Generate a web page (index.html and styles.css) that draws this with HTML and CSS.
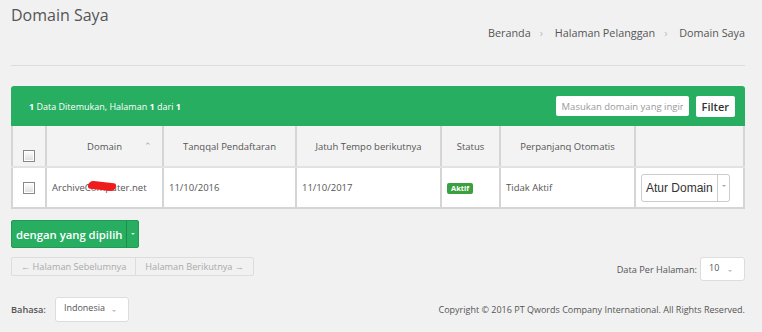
FILE: index.html
```html
<!DOCTYPE html>
<html lang="id">
<head>
  <meta charset="UTF-8" />
  <title>Domain Saya</title>
  <link rel="stylesheet" href="styles.css">
</head>
<body>
  <div class="page">
    <h1>Domain Saya</h1>
    <div class="breadcrumb">
      <span>Beranda</span><span class="sep">&rsaquo;</span>
      <span>Halaman Pelanggan</span><span class="sep">&rsaquo;</span>
      <span>Domain Saya</span>
    </div>
    <hr class="divider">

    <div class="panel">
      <div class="panel-head">
        <div class="found"><b>1</b> Data Ditemukan, Halaman <b>1</b> dari <b>1</b></div>
        <div class="search">
          <input type="text" placeholder="Masukan domain yang ingin dicari">
          <button class="filter">Filter</button>
        </div>
      </div>
      <table class="domains">
        <colgroup>
          <col style="width: 34px">
          <col style="width: 117px">
          <col style="width: 133px">
          <col style="width: 145px">
          <col style="width: 59px">
          <col style="width: 135px">
          <col>
        </colgroup>
        <thead>
          <tr>
            <th class="col-check"><span class="check"></span></th>
            <th class="col-domain">Domain <span class="sort">&#8963;</span></th>
            <th>Tanqqal Pendaftaran</th>
            <th>Jatuh Tempo berikutnya</th>
            <th>Status</th>
            <th>Perpanjanq Otomatis</th>
            <th></th>
          </tr>
        </thead>
        <tbody>
          <tr>
            <td class="col-check"><span class="check"></span></td>
            <td class="left"><span class="domain">ArchiveComputer.net<span class="scribble"></span></span></td>
            <td class="left">11/10/2016</td>
            <td class="left">11/10/2017</td>
            <td class="left"><span class="badge">Aktif</span></td>
            <td class="left">Tidak Aktif</td>
            <td class="left">
              <div class="split">
                <span class="split-main">Atur Domain</span><span class="split-caret"></span>
              </div>
            </td>
          </tr>
        </tbody>
      </table>
    </div>

    <div class="bulk">
      <span class="bulk-main">dengan yang dipilih</span><span class="bulk-caret"></span>
    </div>

    <div class="pager-row">
      <div class="pager">
        <span>&larr; Halaman Sebelumnya</span>
        <span>Halaman Berikutnya &rarr;</span>
      </div>
      <div class="per-page">
        Data Per Halaman:
        <span class="select small">10 <i class="caret"></i></span>
      </div>
    </div>

    <div class="footer">
      <div class="lang">
        <b>Bahasa:</b>
        <span class="select">Indonesia <i class="caret"></i></span>
      </div>
      <div class="copy">Copyright &copy; 2016 PT Qwords Company International. All Rights Reserved.</div>
    </div>
  </div>
</body>
</html>
```

FILE: styles.css
```css
body {
  margin: 0;
  background: #f1f1f1;
  font-family: 'Open Sans', sans-serif;
  color: #555;
}

.page {
  width: 734px;
  margin-left: 11px;
}

h1 {
  margin: 0;
  padding-top: 4px;
  font-size: 16px;
  font-weight: normal;
  color: #555;
  line-height: 22px;
}

.breadcrumb {
  text-align: right;
  font-size: 10.8px;
  color: #555;
  line-height: 14px;
}

.breadcrumb .sep {
  color: #bbb;
  margin: 0 9px;
}

.divider {
  border: none;
  border-top: 1px solid #dcdcdc;
  margin: 25px 0 20px;
}

.panel-head {
  background: #27ae60;
  border-radius: 3px 3px 0 0;
  height: 40px;
  display: flex;
  align-items: center;
  justify-content: space-between;
  padding: 0 10px 0 18px;
  color: #fff;
  font-size: 9px;
}

.search {
  display: flex;
  align-items: center;
  gap: 7px;
}

.search input {
  width: 133px;
  height: 20px;
  box-sizing: border-box;
  border: none;
  border-radius: 2px;
  padding: 0 6px;
  font-family: inherit;
  font-size: 9.5px;
  color: #999;
}

.search input::placeholder {
  color: #999;
}

.filter {
  height: 21px;
  padding: 0 6px;
  border: none;
  border-radius: 2px;
  background: #fff;
  font-family: inherit;
  font-size: 11px;
  font-weight: 600;
  color: #333;
}

.domains {
  width: 100%;
  border-collapse: collapse;
  background: #fff;
  font-size: 9.5px;
  table-layout: fixed;
}

.domains th,
.domains td {
  border: 2px solid #d5d5d5;
  border-top: none;
  padding: 0;
}

.domains th {
  background: #f3f3f3;
  font-weight: normal;
  color: #555;
  height: 36px;
  text-align: center;
  border-bottom-color: #e2e2e2;
}

.domains td {
  height: 39px;
  color: #555;
}

.domains td.left {
  padding-left: 5px;
}

.domains .col-check {
  text-align: center;
}

.domains th.col-check {
  vertical-align: bottom;
  padding-bottom: 4px;
}

.check {
  display: inline-block;
  width: 10px;
  height: 10px;
  border: 1px solid #888;
  background: linear-gradient(#fff, #ddd);
  box-shadow: inset 0 0 0 1px #fff;
  vertical-align: middle;
}

.col-domain {
  position: relative;
}

.sort {
  position: absolute;
  right: 10px;
  top: 13px;
  color: #aaa;
  font-size: 9px;
}

.domain {
  position: relative;
}

.scribble {
  position: absolute;
  left: 36px;
  top: 1px;
  width: 28px;
  height: 8px;
  background: #ee1c1c;
  border-radius: 8px 4px 8px 4px;
  transform: rotate(6deg);
}

.badge {
  display: inline-block;
  background: #3aa040;
  color: #fff;
  font-size: 7.5px;
  font-weight: bold;
  padding: 0 4px;
  border-radius: 2px;
  line-height: 11px;
}

.split {
  display: inline-flex;
  height: 28px;
  box-sizing: border-box;
  border: 1px solid #ccc;
  border-radius: 3px;
  background: #fff;
  white-space: nowrap;
}

.split-main {
  font-family: 'Liberation Sans', Arial, sans-serif;
  font-size: 12px;
  color: #333;
  padding: 0 4px;
  display: flex;
  align-items: center;
  border-right: 1px solid #ccc;
}

.split-caret,
.bulk-caret {
  width: 11px;
  position: relative;
}

.split-caret::after,
.bulk-caret::after,
.caret {
  content: '';
  position: absolute;
  left: 4px;
  top: 10px;
  border-left: 2px solid transparent;
  border-right: 2px solid transparent;
  border-top: 2px solid #aaa;
}

.bulk {
  display: inline-flex;
  margin-top: 11px;
  height: 28px;
  box-sizing: border-box;
  background: #27ae60;
  border: 1px solid #219a54;
  border-radius: 2px;
  color: #fff;
}

.bulk-main {
  display: flex;
  align-items: center;
  padding: 0 4px;
  font-size: 11.3px;
  font-weight: 600;
  border-right: 1px solid #1e8c4c;
}

.bulk-caret::after {
  top: 12px;
  border-top-color: #d6f0df;
}

.pager-row {
  display: flex;
  justify-content: space-between;
  align-items: flex-start;
  margin-top: 9px;
}

.pager {
  display: flex;
  border: 1px solid #ddd;
  border-radius: 2px;
  font-size: 9.2px;
  color: #aaa;
  height: 17px;
}

.pager span {
  padding: 0 9px;
  display: flex;
  align-items: center;
}

.pager span + span {
  border-left: 1px solid #ddd;
}

.per-page {
  display: flex;
  align-items: center;
  gap: 3px;
  font-size: 9.2px;
  color: #555;
}

.select {
  display: inline-block;
  position: relative;
  background: #fff;
  border: 1px solid #ddd;
  border-radius: 3px;
  height: 25px;
  width: 74px;
  padding: 3px 0 0 8px;
  box-sizing: border-box;
  font-size: 9px;
  color: #555;
}

.select.small {
  width: 45px;
  height: 24px;
}

.select .caret {
  left: auto;
  right: 12px;
  top: 12px;
  border-top-color: #bbb;
}

.footer {
  display: flex;
  justify-content: space-between;
  align-items: center;
  margin-top: 16px;
}

.lang {
  display: flex;
  align-items: center;
  gap: 9px;
  font-size: 9.2px;
}

.lang b {
  font-weight: 600;
  color: #555;
}

.copy {
  font-size: 9px;
  color: #555;
}
```
